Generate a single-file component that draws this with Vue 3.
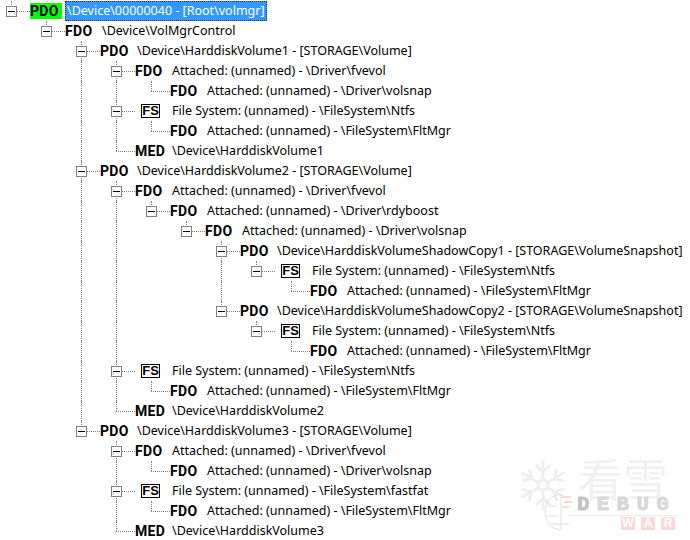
<script setup>
const raw = [
  [0, 'PDO', '\\Device\\00000040 - [Root\\volmgr]'],
  [1, 'FDO', '\\Device\\VolMgrControl'],
  [2, 'PDO', '\\Device\\HarddiskVolume1 - [STORAGE\\Volume]'],
  [3, 'FDO', 'Attached: (unnamed) - \\Driver\\fvevol'],
  [4, 'FDO', 'Attached: (unnamed) - \\Driver\\volsnap'],
  [3, 'FS', 'File System: (unnamed) - \\FileSystem\\Ntfs'],
  [4, 'FDO', 'Attached: (unnamed) - \\FileSystem\\FltMgr'],
  [3, 'MED', '\\Device\\HarddiskVolume1'],
  [2, 'PDO', '\\Device\\HarddiskVolume2 - [STORAGE\\Volume]'],
  [3, 'FDO', 'Attached: (unnamed) - \\Driver\\fvevol'],
  [4, 'FDO', 'Attached: (unnamed) - \\Driver\\rdyboost'],
  [5, 'FDO', 'Attached: (unnamed) - \\Driver\\volsnap'],
  [6, 'PDO', '\\Device\\HarddiskVolumeShadowCopy1 - [STORAGE\\VolumeSnapshot]'],
  [7, 'FS', 'File System: (unnamed) - \\FileSystem\\Ntfs'],
  [8, 'FDO', 'Attached: (unnamed) - \\FileSystem\\FltMgr'],
  [6, 'PDO', '\\Device\\HarddiskVolumeShadowCopy2 - [STORAGE\\VolumeSnapshot]'],
  [7, 'FS', 'File System: (unnamed) - \\FileSystem\\Ntfs'],
  [8, 'FDO', 'Attached: (unnamed) - \\FileSystem\\FltMgr'],
  [3, 'FS', 'File System: (unnamed) - \\FileSystem\\Ntfs'],
  [4, 'FDO', 'Attached: (unnamed) - \\FileSystem\\FltMgr'],
  [3, 'MED', '\\Device\\HarddiskVolume2'],
  [2, 'PDO', '\\Device\\HarddiskVolume3 - [STORAGE\\Volume]'],
  [3, 'FDO', 'Attached: (unnamed) - \\Driver\\fvevol'],
  [4, 'FDO', 'Attached: (unnamed) - \\Driver\\volsnap'],
  [3, 'FS', 'File System: (unnamed) - \\FileSystem\\fastfat'],
  [4, 'FDO', 'Attached: (unnamed) - \\FileSystem\\FltMgr'],
  [3, 'MED', '\\Device\\HarddiskVolume3'],
]

const continues = (i, k) => {
  for (let j = i + 1; j < raw.length; j++) {
    if (raw[j][0] < k) return false
    if (raw[j][0] === k) return true
  }
  return false
}

const rows = raw.map(([depth, kind, text], i) => ({
  depth,
  kind,
  text,
  root: i === 0,
  toggle: i + 1 < raw.length && raw[i + 1][0] > depth,
  guides: Array.from({ length: depth }, (_, k) => continues(i, k)),
  next: continues(i, depth),
}))

const spokes = [0, 60, 120, 180, 240, 300]
</script>

<template>
  <div class="page">
    <div class="tree">
      <div v-for="(r, i) in rows" :key="i" class="row">
        <span v-for="(g, k) in r.guides" :key="k" class="guide" :class="{ on: g }"></span>
        <span class="elbow" :class="{ next: r.next }">
          <span class="up"></span>
          <span class="across"></span>
          <span v-if="r.next" class="down"></span>
          <span v-if="r.toggle" class="toggle"><i></i></span>
        </span>
        <span class="kind">
          <span v-if="r.kind === 'FS'" class="fs">FS</span>
          <span v-else class="label" :class="{ green: r.root }">{{ r.kind }}</span>
        </span>
        <span class="text" :class="{ selected: r.root }">{{ r.text }}</span>
      </div>
    </div>

    <div class="mark" aria-hidden="true">
      <svg class="flake" viewBox="-28 -28 56 56" width="56" height="56">
        <g v-for="a in spokes" :key="a" :transform="`rotate(${a})`" fill="none" stroke="#efefef" stroke-width="3">
          <path d="M0 -5V-25M-7 -20L0 -13L7 -20" />
        </g>
        <circle r="5" fill="none" stroke="#efefef" stroke-width="3" />
      </svg>
      <div class="han">看雪</div>
      <svg class="brain" viewBox="0 0 30 40" width="30" height="40">
        <path d="M18 2C8 3 2 10 2 20C2 30 8 37 18 38M18 2V38M5 14H14M4 24H14M8 32H26" fill="none" stroke="#dedede" stroke-width="1" />
        <path d="M19 5H28M21 10H29M19 15H26" fill="none" stroke="#f8d8d8" stroke-width="2" />
      </svg>
      <div class="debug"><span class="d">D</span>EBUG</div>
      <div class="rule"></div>
      <div class="war"><span>W</span><span>A</span><span>R</span></div>
    </div>
  </div>
</template>

<style>
html, body { margin: 0; background: #fff; }
</style>

<style scoped>
.page {
  position: relative;
  width: 690px;
  height: 540px;
  overflow: hidden;
  background: #fff;
  font-family: "Noto Sans", "Liberation Sans", sans-serif;
  font-size: 12.5px;
  color: #000;
}
.tree { display: flex; flex-direction: column; padding: 1px 0 0 11px; }
.row { display: flex; align-items: center; height: 20px; white-space: nowrap; }
.guide { flex: none; width: 35px; height: 20px; box-sizing: border-box; }
.guide.on { border-left: 1px dotted #808080; }
.elbow { flex: none; position: relative; width: 19px; height: 20px; }
.up, .down, .across { position: absolute; left: 0; }
.up { top: 0; height: 10px; border-left: 1px dotted #808080; }
.down { top: 10px; height: 10px; border-left: 1px dotted #808080; }
.across { top: 10px; width: 19px; border-top: 1px dotted #808080; }
.toggle {
  position: absolute;
  left: -5px;
  top: 5px;
  width: 9px;
  height: 9px;
  border: 1px solid #808080;
  background: #fff;
  display: flex;
  align-items: center;
  justify-content: center;
}
.toggle i { display: block; width: 7px; height: 1px; background: #000; }
.kind { flex: none; width: 35px; height: 20px; display: flex; align-items: center; }
.label {
  font-family: "Roboto", "Liberation Sans", sans-serif;
  font-weight: 700;
  font-size: 14px;
  letter-spacing: 0.3px;
  line-height: 16px;
}
.label.green { background: #00ff00; padding-right: 3px; }
.fs {
  margin-left: 6px;
  box-sizing: border-box;
  width: 19px;
  height: 14px;
  border: 1px solid #000;
  font-family: "Liberation Sans", sans-serif;
  font-weight: 700;
  font-size: 13px;
  line-height: 12px;
  text-align: center;
}
.text { line-height: 18px; padding: 0 2px; }
.selected {
  background: #3399ff;
  color: #fff;
  outline: 1px dotted #333;
  outline-offset: -1px;
  line-height: 20px;
}
.mark { position: absolute; left: 500px; top: 440px; width: 190px; height: 100px; filter: blur(0.6px); }
.flake { position: absolute; left: 15px; top: 17px; }
.han {
  position: absolute;
  left: 78px;
  top: 20px;
  font-family: "Noto Sans CJK SC", sans-serif;
  font-size: 45px;
  line-height: 36px;
  color: #f1f1f1;
  white-space: nowrap;
}
.brain { position: absolute; left: 43px; top: 52px; }
.debug {
  position: absolute;
  left: 77px;
  top: 56px;
  font-family: "Liberation Mono", monospace;
  font-weight: 700;
  font-size: 21px;
  line-height: 18px;
  letter-spacing: 7.2px;
  color: #d8d8d8;
  -webkit-text-stroke: 1px #d8d8d8;
}
.d { color: #c4c4c4; -webkit-text-stroke: 1px #c4c4c4; }
.rule { position: absolute; left: 70px; top: 75px; width: 108px; height: 1px; background: #ececec; }
.war {
  position: absolute;
  left: 121px;
  top: 77px;
  display: flex;
  gap: 6px;
  font-family: "Liberation Sans", sans-serif;
  font-weight: 700;
  font-size: 12px;
  line-height: 13px;
  color: #fff;
}
.war span { width: 14px; height: 13px; background: #fad9d9; text-align: center; }
</style>
